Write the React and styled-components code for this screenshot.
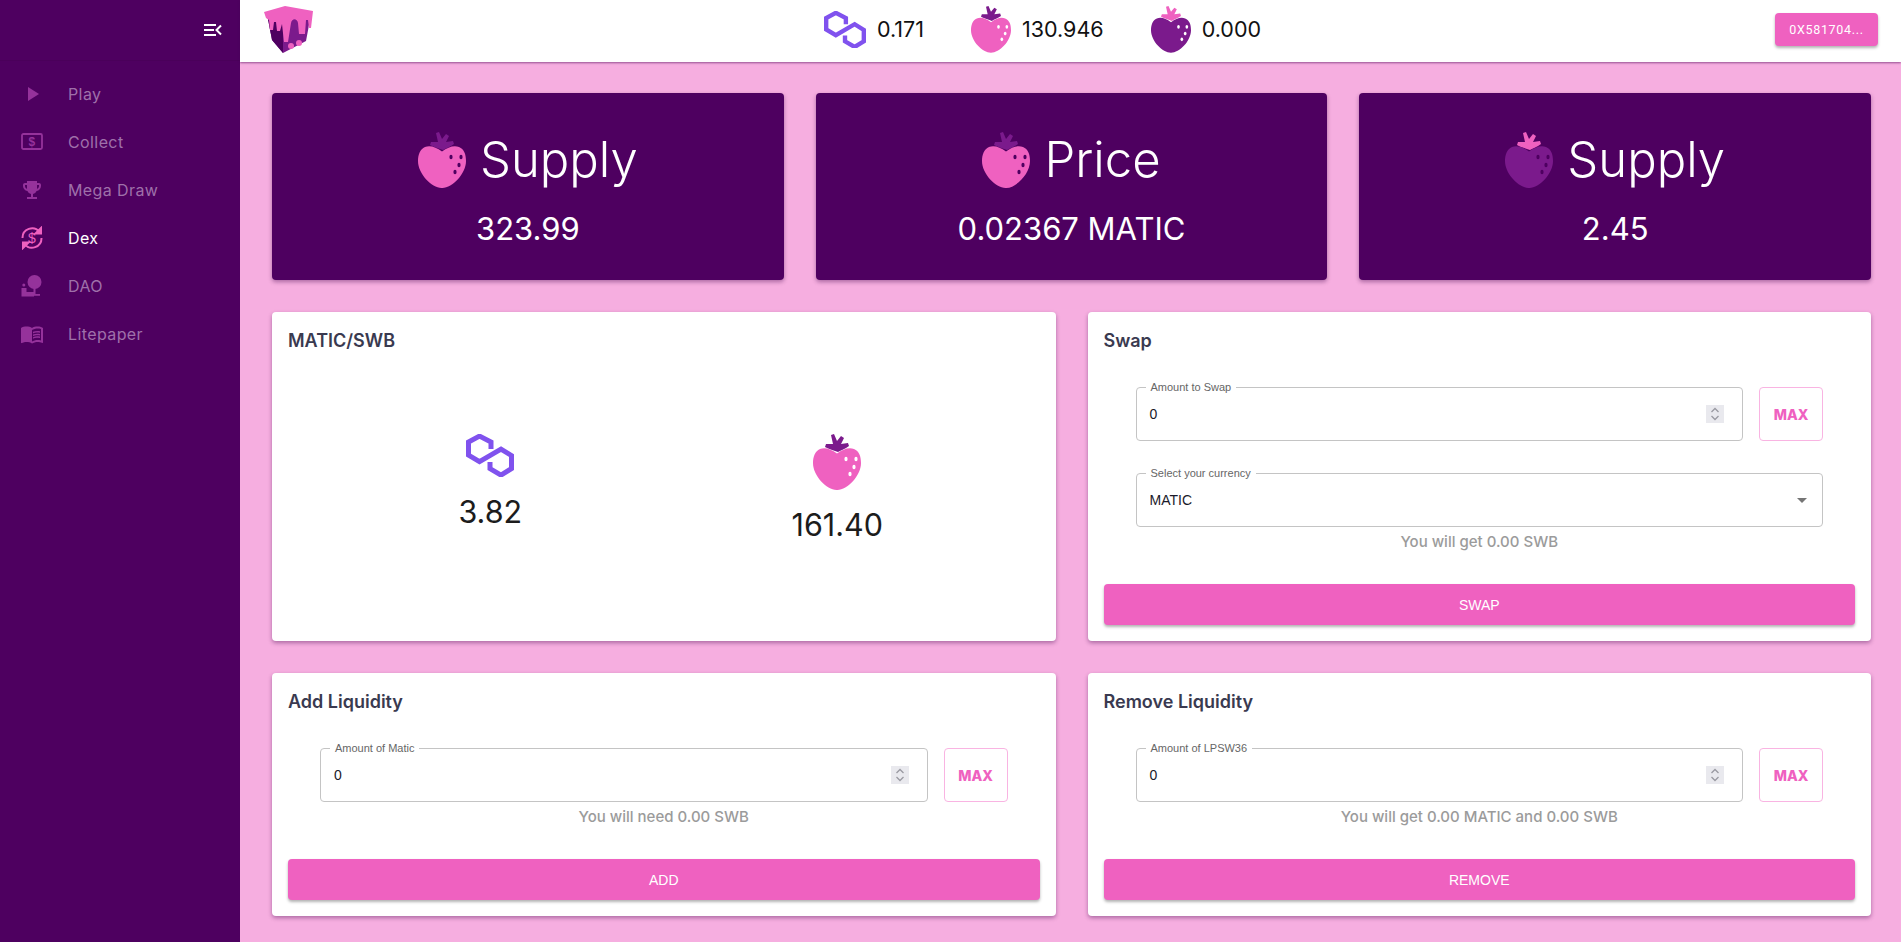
import React from 'react';
import styled, { createGlobalStyle } from 'styled-components';
import { MdPlayArrow, MdEmojiEvents, MdMenuBook, MdArrowDropDown } from 'react-icons/md';

const PURPLE = '#4e0060';
const PINK = '#ef61c0';
const VIOLET = '#7b1a8c';
const FONT = 'Inter, "Open Sans", sans-serif';

const GlobalStyle = createGlobalStyle`
  html, body { margin: 0; padding: 0; height: 100%; overflow: hidden; }
  body { font-family: ${FONT}; background: #f6aee0; }
  * { box-sizing: border-box; }
`;

const Shell = styled.div`
  display: flex;
  width: 100%;
  height: 942px;
`;

const Sidebar = styled.aside`
  flex: 0 0 240px;
  background: ${PURPLE};
  color: #fff;
`;

const SidebarTop = styled.div`
  display: flex;
  align-items: center;
  justify-content: flex-end;
  height: 61px;
  padding-right: 18px;
  border-bottom: 1px solid #4a005a;
`;

const NavList = styled.nav`
  padding-top: 9px;
`;

const NavItem = styled.div`
  display: flex;
  align-items: center;
  height: 48px;
  padding-left: 20px;
  font-size: 16px;
  letter-spacing: 0.4px;
  color: ${(p) => (p.$active ? '#fff' : '#9f70aa')};
`;

const NavIcon = styled.span`
  display: flex;
  align-items: center;
  justify-content: center;
  width: 24px;
  height: 24px;
  margin-right: 24px;
  font-size: 24px;
  color: ${(p) => (p.$active ? PINK : '#95329b')};
`;

const Main = styled.div`
  flex: 1;
  min-width: 0;
  display: flex;
  flex-direction: column;
`;

const Header = styled.header`
  position: relative;
  display: flex;
  align-items: center;
  justify-content: space-between;
  height: 62px;
  padding: 0 23px 3px 24px;
  background: #fff;
  box-shadow: 0 1px 2px rgba(70, 0, 80, 0.55);
`;

const Balances = styled.div`
  display: flex;
  align-items: center;
  margin-right: 3px;
`;

const Balance = styled.div`
  display: flex;
  align-items: center;
  margin-left: ${(p) => p.$gap || 0}px;
  font-size: 21.5px;
  color: #111;
  gap: 11px;
`;

const WalletButton = styled.button`
  width: 103px;
  height: 33px;
  border: 0;
  border-radius: 4px;
  background: ${PINK};
  color: #fff;
  font-family: Roboto, sans-serif;
  font-size: 12.5px;
  letter-spacing: 0.7px;
  box-shadow: 0 2px 3px rgba(0, 0, 0, 0.3);
`;

const Content = styled.main`
  flex: 1;
  display: grid;
  grid-template-rows: 187px 329px 243px;
  gap: 32px;
  padding: 31px 30px 0 32px;
`;

const StatRow = styled.section`
  display: grid;
  grid-template-columns: repeat(3, 1fr);
  gap: 32px;
`;

const PanelRow = styled.section`
  display: grid;
  grid-template-columns: repeat(2, 1fr);
  gap: 32px;
`;

const StatCard = styled.div`
  display: flex;
  flex-direction: column;
  align-items: center;
  justify-content: center;
  padding-bottom: 2px;
  background: ${PURPLE};
  color: #fff;
  border-radius: 4px;
  box-shadow: 0 2px 4px rgba(60, 0, 70, 0.4);
`;

const StatTitle = styled.div`
  display: flex;
  align-items: center;
  gap: 14px;
  margin-top: 2px;
  font-size: 49px;
  font-weight: 300;
  line-height: 72px;
`;

const StatValue = styled.div`
  margin-top: 13px;
  font-size: 31px;
  font-weight: 400;
  line-height: 40px;
`;

const Card = styled.div`
  display: flex;
  flex-direction: column;
  padding: 16px;
  background: #fff;
  border-radius: 4px;
  box-shadow: 0 2px 4px rgba(60, 0, 70, 0.4);
`;

const CardTitle = styled.h2`
  margin: 0;
  font-size: 18px;
  font-weight: 600;
  line-height: 26px;
  color: #3a3a50;
`;

const PoolBody = styled.div`
  flex: 1;
  display: grid;
  grid-template-columns: 347px 347px;
  justify-content: center;
  align-items: start;
  padding-top: 80px;
`;

const PoolToken = styled.div`
  display: flex;
  flex-direction: column;
  align-items: center;
  gap: 16px;
  font-size: 30.5px;
  font-weight: 400;
  line-height: 38px;
  color: #1c1c1c;
`;

const Form = styled.div`
  display: flex;
  flex-direction: column;
  gap: 26px;
  margin-top: 27px;
  padding: 0 32px;
`;

const FieldRow = styled.div`
  display: flex;
  gap: 16px;
`;

const Field = styled.fieldset`
  flex: 1;
  display: flex;
  align-items: center;
  justify-content: space-between;
  min-width: 0;
  height: 60px;
  margin: 0;
  padding: 0 14px 6px 13px;
  border: 1px solid #c4c4c4;
  border-radius: 4px;
  font-family: "Liberation Sans", Arial, sans-serif;
`;

const FieldLabel = styled.legend`
  margin-left: -4px;
  padding: 0 5px;
  font-size: 11px;
  line-height: 12px;
  color: #666;
`;

const FieldValue = styled.span`
  font-size: 14px;
  color: #1a1a2a;
`;

const Stepper = styled.span`
  display: flex;
  width: 18px;
  height: 18px;
  margin-right: 4px;
  background: #e9e9ee;
`;

const SelectArrow = styled.span`
  display: flex;
  margin-right: -6px;
  font-size: 24px;
  color: #757575;
`;

const MaxButton = styled.button`
  flex: 0 0 64px;
  align-self: flex-end;
  height: 54px;
  padding: 0;
  background: #fff;
  border: 1px solid #f9b4e2;
  border-radius: 4px;
  color: ${PINK};
  font-family: ${FONT};
  font-size: 14px;
  font-weight: 800;
`;

const Note = styled.div`
  margin-top: -21px;
  text-align: center;
  font-size: 15px;
  font-weight: 500;
  line-height: 20px;
  color: #9b9b9b;
`;

const ActionButton = styled.button`
  height: 41px;
  margin-top: auto;
  border: 0;
  border-radius: 4px;
  background: ${PINK};
  color: #fff;
  font-family: "Liberation Sans", Arial, sans-serif;
  font-size: 14px;
  box-shadow: 0 2px 3px rgba(0, 0, 0, 0.3);
`;

function Strawberry({ size = 40, body = PINK, leaf = VIOLET, seed = '#fff' }) {
  return (
    <svg width={size} height={size * 1.167} viewBox="0 0 48 56">
      <path d="M25 18 C20 16 15 15 12 13 L13 10 L20 10 L18 1 L21 0 L24 7 L28 2 L31 4 L28 10 L35 9 L36 12 C32 15 28 16 25 18Z" fill={leaf} />
      <path d="M24 19.5 C18 15 12 13 7 15 C2 17 0 23 0 29 C0 42 14 56 24 56 C34 56 48 42 48 29 C48 22 46 17 41 15 C36 13 30 15 24 19.5Z" fill={body} />
      <ellipse cx="33" cy="25" rx="1.6" ry="2.2" fill={seed} />
      <ellipse cx="43" cy="25" rx="1.6" ry="2.2" fill={seed} />
      <ellipse cx="41" cy="33" rx="1.6" ry="2.2" fill={seed} />
      <ellipse cx="37" cy="40" rx="1.6" ry="2.2" fill={seed} />
    </svg>
  );
}

function PolygonMark({ width = 42 }) {
  return (
    <svg width={width} height={width * 0.9} viewBox="0 0 48 43" fill="none">
      <path
        d="M25 15 V8 L13.5 2 L2.5 8 V21 L13.5 27.5 L35 15 L45.5 21.5 V34.5 L35 41 L24 34.5 V28"
        stroke="#8052ee"
        strokeWidth="5"
      />
    </svg>
  );
}

function CubeLogo() {
  return (
    <svg width="49" height="47" viewBox="0 0 49 47">
      <path d="M3 8 L47 8 L42 35 L19 47 L8 34Z" fill="#7b1a8c" />
      <path d="M19 47 L8 34 L3 8 L19 18Z" fill="#4e0060" />
      <path d="M0 6 L21 0 L49 5 L47 22 L45 22 L44 14 L42 14 L41 28 L35 28 L34 17 C33 12 28 12 27 17 L24 36 L20 36 L18 18 L16 25 L13 25 L12 16 L10 16 L9 24 L6 24 L5 14 L2 12Z" fill={PINK} />
      <circle cx="27" cy="40" r="3" fill={PINK} />
      <circle cx="35" cy="37" r="3" fill={PINK} />
    </svg>
  );
}

function CollapseIcon() {
  return (
    <svg width="18" height="14" viewBox="0 0 18 14" fill="none" stroke="#fff" strokeWidth="2">
      <path d="M0 2 H12 M0 7 H10 M0 12 H12" />
      <path d="M17 2.5 L12.5 7 L17 11.5" />
    </svg>
  );
}

function CashIcon() {
  return (
    <svg width="22" height="18" viewBox="0 0 22 18">
      <rect x="1" y="1" width="20" height="15" rx="1.5" fill="none" stroke="currentColor" strokeWidth="1.8" />
      <text x="11" y="13" textAnchor="middle" fontSize="12" fontWeight="700" fontFamily="Liberation Sans" fill="currentColor">$</text>
    </svg>
  );
}

function ExchangeIcon() {
  return (
    <svg width="24" height="24" viewBox="0 0 24 24" fill="none" stroke="currentColor" strokeWidth="2">
      <path d="M2.5 12 A9.5 9.5 0 0 1 19.5 6" />
      <path d="M21.5 12 A9.5 9.5 0 0 1 4.5 18" />
      <path d="M21 2 V7.5 H15.5 Z" fill="currentColor" />
      <path d="M3 22 V16.5 H8.5 Z" fill="currentColor" />
      <text x="12" y="17" textAnchor="middle" fontSize="14" fontFamily="Liberation Sans" fill="currentColor" stroke="none">$</text>
    </svg>
  );
}

function DaoIcon() {
  return (
    <svg width="24" height="24" viewBox="0 0 24 24" fill="currentColor">
      <circle cx="14.5" cy="8" r="7" />
      <rect x="13.5" y="13" width="2" height="8" />
      <rect x="9" y="20" width="11" height="1.8" />
      <circle cx="3.8" cy="11" r="1.5" />
      <path d="M1.5 14 H6.5 V18 H14 V22.5 H1.5Z" />
    </svg>
  );
}

function SpinnerArrows() {
  return (
    <svg width="18" height="18" viewBox="0 0 18 18" fill="none" stroke="#9a9aa2" strokeWidth="1.3">
      <path d="M5.5 7 L9 3.5 L12.5 7" />
      <path d="M5.5 11 L9 14.5 L12.5 11" />
    </svg>
  );
}

function AmountField({ label, value }) {
  return (
    <FieldRow>
      <Field>
        <FieldLabel>{label}</FieldLabel>
        <FieldValue>{value}</FieldValue>
        <Stepper><SpinnerArrows /></Stepper>
      </Field>
      <MaxButton>MAX</MaxButton>
    </FieldRow>
  );
}

const NAV = [
  { label: 'Play', icon: <MdPlayArrow size={24} /> },
  { label: 'Collect', icon: <CashIcon /> },
  { label: 'Mega Draw', icon: <MdEmojiEvents size={24} /> },
  { label: 'Dex', icon: <ExchangeIcon />, active: true },
  { label: 'DAO', icon: <DaoIcon /> },
  { label: 'Litepaper', icon: <MdMenuBook size={24} /> },
];

export default function App() {
  return (
    <>
      <GlobalStyle />
      <Shell>
        <Sidebar>
          <SidebarTop><CollapseIcon /></SidebarTop>
          <NavList>
            {NAV.map((item) => (
              <NavItem key={item.label} $active={item.active}>
                <NavIcon $active={item.active}>{item.icon}</NavIcon>
                {item.label}
              </NavItem>
            ))}
          </NavList>
        </Sidebar>
        <Main>
          <Header>
            <CubeLogo />
            <Balances>
              <Balance><PolygonMark />0.171</Balance>
              <Balance $gap={47}><Strawberry />130.946</Balance>
              <Balance $gap={47}><Strawberry body={VIOLET} leaf={PINK} />0.000</Balance>
            </Balances>
            <WalletButton>0X581704...</WalletButton>
          </Header>
          <Content>
            <StatRow>
              <StatCard>
                <StatTitle><Strawberry size={48} seed={PURPLE} />Supply</StatTitle>
                <StatValue>323.99</StatValue>
              </StatCard>
              <StatCard>
                <StatTitle><Strawberry size={48} seed={PURPLE} />Price</StatTitle>
                <StatValue>0.02367 MATIC</StatValue>
              </StatCard>
              <StatCard>
                <StatTitle><Strawberry size={48} body={VIOLET} leaf={PINK} seed={PURPLE} />Supply</StatTitle>
                <StatValue>2.45</StatValue>
              </StatCard>
            </StatRow>
            <PanelRow>
              <Card>
                <CardTitle>MATIC/SWB</CardTitle>
                <PoolBody>
                  <PoolToken><PolygonMark width={48} />3.82</PoolToken>
                  <PoolToken><Strawberry size={48} />161.40</PoolToken>
                </PoolBody>
              </Card>
              <Card>
                <CardTitle>Swap</CardTitle>
                <Form>
                  <AmountField label="Amount to Swap" value="0" />
                  <FieldRow>
                    <Field>
                      <FieldLabel>Select your currency</FieldLabel>
                      <FieldValue>MATIC</FieldValue>
                      <SelectArrow><MdArrowDropDown /></SelectArrow>
                    </Field>
                  </FieldRow>
                  <Note>You will get 0.00 SWB</Note>
                </Form>
                <ActionButton>SWAP</ActionButton>
              </Card>
            </PanelRow>
            <PanelRow>
              <Card>
                <CardTitle>Add Liquidity</CardTitle>
                <Form>
                  <AmountField label="Amount of Matic" value="0" />
                  <Note>You will need 0.00 SWB</Note>
                </Form>
                <ActionButton>ADD</ActionButton>
              </Card>
              <Card>
                <CardTitle>Remove Liquidity</CardTitle>
                <Form>
                  <AmountField label="Amount of LPSW36" value="0" />
                  <Note>You will get 0.00 MATIC and 0.00 SWB</Note>
                </Form>
                <ActionButton>REMOVE</ActionButton>
              </Card>
            </PanelRow>
          </Content>
        </Main>
      </Shell>
    </>
  );
}
